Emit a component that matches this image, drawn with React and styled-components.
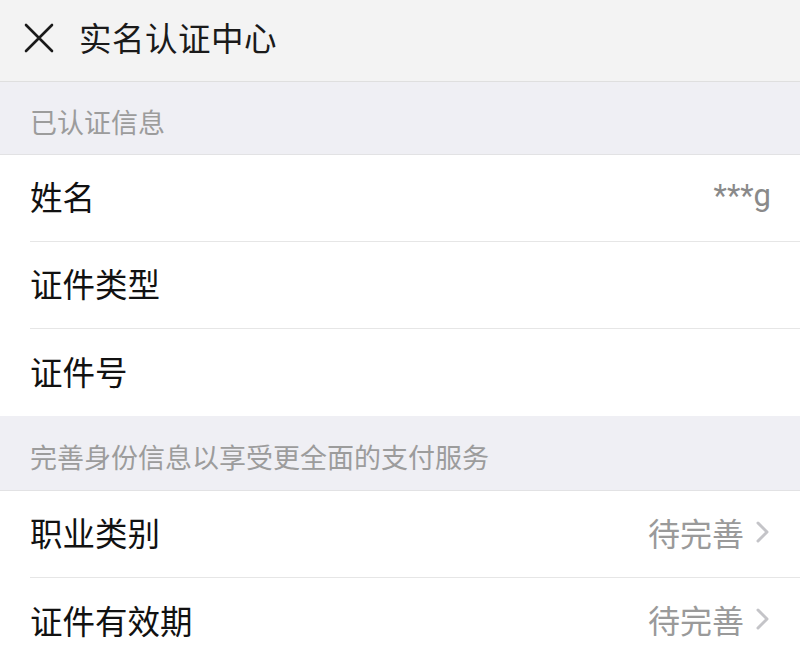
import React from 'react'
import styled, { createGlobalStyle } from 'styled-components'

const GlobalStyle = createGlobalStyle`
  html, body {
    margin: 0;
    padding: 0;
    background: #ffffff;
    font-family: "Noto Sans CJK SC", "Noto Sans", sans-serif;
  }
`

const rows1 = [
  { label: '姓名', value: '***g' },
  { label: '证件类型' },
  { label: '证件号' },
]

const rows2 = [
  { label: '职业类别', value: '待完善', arrow: true },
  { label: '证件有效期', value: '待完善', arrow: true },
]

const App = () => {
  return (
    <Page>
      <GlobalStyle />
      <Header>
        <CloseButton>
          <svg width="30" height="30" viewBox="0 0 30 30">
            <path d="M2 2 L28 28 M28 2 L2 28" stroke="#1a1a1a" strokeWidth="2.6" strokeLinecap="round" />
          </svg>
        </CloseButton>
        <Title>实名认证中心</Title>
      </Header>

      <SectionTitle>已认证信息</SectionTitle>
      <Group>
        {rows1.map((r, i) => (
          <Row key={r.label} last={i === rows1.length - 1}>
            <Label>{r.label}</Label>
            {r.value && <Value masked>{r.value}</Value>}
          </Row>
        ))}
      </Group>

      <SectionTitle tall>完善身份信息以享受更全面的支付服务</SectionTitle>
      <Group>
        {rows2.map((r, i) => (
          <Row key={r.label} last={i === rows2.length - 1}>
            <Label>{r.label}</Label>
            <Right>
              <Value>{r.value}</Value>
              {r.arrow && (
                <svg width="16" height="26" viewBox="0 0 16 26">
                  <path d="M3 4 L12 13 L3 22" stroke="#c4c4c8" strokeWidth="3" fill="none" strokeLinecap="round" strokeLinejoin="round" />
                </svg>
              )}
            </Right>
          </Row>
        ))}
      </Group>
    </Page>
  )
}

const Page = styled.div`
  width: 800px;
  min-height: 649px;
  background: #ffffff;
`

const Header = styled.header`
  height: 82px;
  display: flex;
  align-items: center;
  background: #f3f3f3;
  border-bottom: 1px solid #dfdfdf;
  box-sizing: border-box;
  padding-left: 24px;
`

const CloseButton = styled.div`
  width: 30px;
  height: 30px;
  display: flex;
  align-items: center;
  justify-content: center;
  margin-right: 25px;
  margin-top: -6px;
`

const Title = styled.h1`
  margin: 0;
  margin-top: -9px;
  font-size: 32.5px;
  font-weight: 400;
  color: #1a1a1a;
  letter-spacing: 0.5px;
`

const SectionTitle = styled.div`
  height: ${({ tall }) => (tall ? '75px' : '73px')};
  display: flex;
  align-items: center;
  padding: 6px 30px 0;
  box-sizing: border-box;
  background: #efeff4;
  color: #9c9c9c;
  font-size: 27px;
  border-bottom: 1px solid #e2e2e4;
`

const Group = styled.div`
  background: #ffffff;
`

const Row = styled.div`
  margin-left: 30px;
  padding-right: 29px;
  padding-bottom: 5px;
  height: 87px;
  display: flex;
  align-items: center;
  justify-content: space-between;
  box-sizing: border-box;
  border-bottom: ${({ last }) => (last ? 'none' : '1px solid #e6e6e6')};
`

const Label = styled.span`
  font-size: 32.5px;
  color: #111111;
`

const Right = styled.div`
  display: flex;
  align-items: center;
  gap: 11px;
`

const Value = styled.span`
  font-size: ${({ masked }) => (masked ? '31px' : '32px')};
  color: ${({ masked }) => (masked ? '#8a8a8a' : '#9a9a9a')};
  font-family: ${({ masked }) => (masked ? '"Roboto", "Noto Sans", sans-serif' : 'inherit')};
`

export default App
